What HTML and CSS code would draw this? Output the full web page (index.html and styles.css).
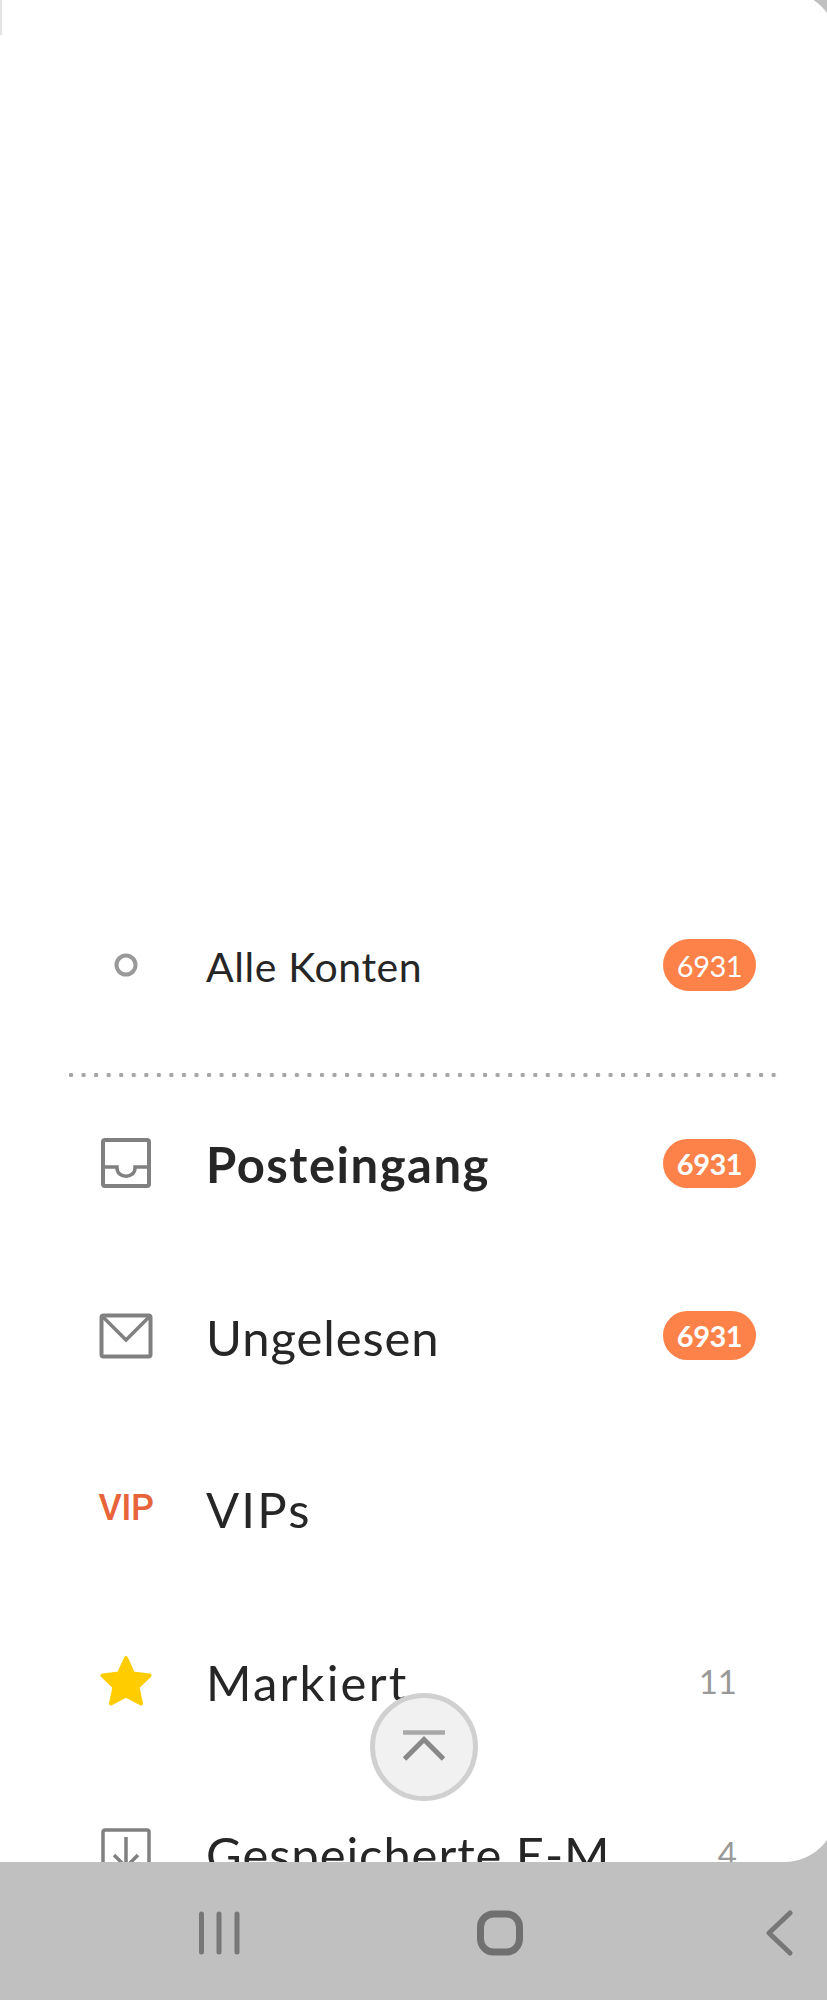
FILE: index.html
```html
<!DOCTYPE html>
<html lang="de">
<head>
  <meta charset="UTF-8" />
  <meta name="viewport" content="width=device-width, initial-scale=1.0"/>
  <title>E-Mail Ordner</title>
  <link rel="stylesheet" href="styles.css">
</head>
<body>
  <div class="screen">
    <span class="edge-mark"></span>

    <main class="panel">
      <div class="row row-account">
        <span class="row-icon">
          <svg width="24" height="24" viewBox="0 0 24 24"><circle cx="12" cy="12" r="9.5" fill="none" stroke="#999" stroke-width="4"/></svg>
        </span>
        <span class="label label-account">Alle Konten</span>
        <span class="badge badge-account">6931</span>
      </div>

      <div class="dots"></div>

      <div class="row">
        <span class="row-icon">
          <svg width="50" height="50" viewBox="0 0 50 50" fill="none" stroke="#808080" stroke-width="4">
            <rect x="2" y="2" width="46" height="46" rx="2"/>
            <path d="M2 29H16V30C16 41 34 41 34 30V29H48" stroke-width="3.5"/>
          </svg>
        </span>
        <span class="label label-bold">Posteingang</span>
        <span class="badge">6931</span>
      </div>

      <div class="row">
        <span class="row-icon">
          <svg width="54" height="46" viewBox="0 0 54 46" fill="none" stroke="#808080" stroke-width="4">
            <rect x="2.5" y="2.5" width="49" height="41" rx="2"/>
            <path d="M4 4L27 27L50 4" stroke-width="3.5"/>
          </svg>
        </span>
        <span class="label">Ungelesen</span>
        <span class="badge">6931</span>
      </div>

      <div class="row">
        <span class="row-icon"><span class="vip-mark">VIP</span></span>
        <span class="label label-wide">VIPs</span>
      </div>

      <div class="row">
        <span class="row-icon">
          <svg width="52" height="52" viewBox="0 0 52 52">
            <path d="M26 3L33 18.500L49.500 20.500L37.500 32L41 48.500L26 40.500L11 48.500L14.500 32L2.500 20.500L19 18.500Z" fill="#ffcc00" stroke="#ffcc00" stroke-width="4" stroke-linejoin="round"/>
          </svg>
        </span>
        <span class="label label-wide">Markiert</span>
        <span class="count">11</span>
      </div>

      <div class="row">
        <span class="row-icon">
          <svg width="50" height="50" viewBox="0 0 50 50" fill="none" stroke="#808080" stroke-width="3.500">
            <rect x="2" y="2" width="46" height="46" rx="2"/>
            <path d="M25 9V38M13 27L25 39L37 27"/>
          </svg>
        </span>
        <span class="label">Gespeicherte E-M</span>
        <span class="count">4</span>
      </div>

      <button class="top-btn" aria-label="Nach oben">
        <svg width="42" height="32" viewBox="0 0 42 32" fill="none">
          <path d="M0 2.500H42" stroke="#a8a8a8" stroke-width="4.500"/>
          <path d="M1.500 29L21 9.500L40.500 29" stroke="#888" stroke-width="5"/>
        </svg>
      </button>
    </main>

    <nav class="nav-bar">
      <svg class="nav-recents" width="44" height="44" viewBox="0 0 44 44" stroke="#777" stroke-width="5" stroke-linecap="round">
        <path d="M4.500 3V41M22 3V41M40 3V41"/>
      </svg>
      <svg class="nav-home" width="50" height="48" viewBox="0 0 50 48" fill="none" stroke="#707070" stroke-width="7">
        <rect x="5.500" y="5" width="39" height="38" rx="13"/>
      </svg>
      <svg class="nav-back" width="28" height="46" viewBox="0 0 28 46" fill="none" stroke="#777" stroke-width="5" stroke-linecap="round" stroke-linejoin="round">
        <path d="M25 3L4 23L25 43"/>
      </svg>
    </nav>
  </div>
</body>
</html>
```

FILE: styles.css
```css
* {
  box-sizing: border-box;
}
body {
  margin: 0;
  background: #c0c0c0;
  font-family: 'Lato', 'Noto Sans', sans-serif;
  color: #262626;
}
.screen {
  position: relative;
  width: 827px;
  height: 2000px;
  overflow: hidden;
  display: flex;
  flex-direction: column;
}
.edge-mark {
  position: absolute;
  top: 0;
  left: 0;
  width: 2px;
  height: 35px;
  background: #e4e4e4;
  z-index: 1;
}
.panel {
  position: relative;
  width: 837px;
  height: 1871px;
  margin-top: -9px;
  padding-top: 888px;
  background: #fff;
  border-radius: 0 53px 53px 0;
  overflow: hidden;
  flex-shrink: 0;
}
.row {
  display: flex;
  align-items: center;
  height: 172.5px;
  padding: 0 81px 0 98px;
}
.row-icon {
  width: 56px;
  display: flex;
  justify-content: center;
  flex-shrink: 0;
}
.label {
  margin-left: 52px;
  font-size: 49px;
  font-weight: 400;
  letter-spacing: 0.9px;
  white-space: nowrap;
  position: relative;
  top: 1px;
}
.label-account {
  font-size: 41px;
  letter-spacing: 0.6px;
  margin-left: 52px;
}
.label-bold {
  letter-spacing: 1.5px;
  font-weight: 700;
}
.label-wide {
  letter-spacing: 2.2px;
}
.badge {
  margin-left: auto;
  width: 93px;
  height: 49px;
  border-radius: 25px;
  background: #fd824a;
  color: #fff;
  font-size: 29px;
  font-weight: 700;
  letter-spacing: -0.5px;
  display: flex;
  align-items: center;
  justify-content: center;
}
.badge-account {
  height: 52px;
  border-radius: 26px;
  font-weight: 400;
}
.count {
  margin-left: auto;
  margin-right: 19px;
  font-size: 33px;
  color: #999;
}
.vip-mark {
  font-family: 'Roboto', sans-serif;
  font-size: 36px;
  font-weight: 500;
  letter-spacing: -0.5px;
  color: #e8643a;
}
.dots {
  width: 708px;
  height: 4px;
  margin: 21.5px 0 0 69px;
  background: radial-gradient(circle at 2px 2px, #a6a6a6 2px, transparent 2.5px) 0 0 / 12.55px 4px repeat-x;
}
.top-btn {
  position: absolute;
  left: 370px;
  top: 1702px;
  width: 108px;
  height: 108px;
  padding: 0 0 2px;
  border: 5px solid #d0d0d0;
  border-radius: 50%;
  background: #f1f1f1;
  display: flex;
  align-items: center;
  justify-content: center;
}
.nav-bar {
  flex: 1;
  display: flex;
  align-items: center;
  padding: 4px 0 0 197px;
  background: #c0c0c0;
}
.nav-home {
  margin-left: 234px;
}
.nav-back {
  margin-left: 240px;
}
```
